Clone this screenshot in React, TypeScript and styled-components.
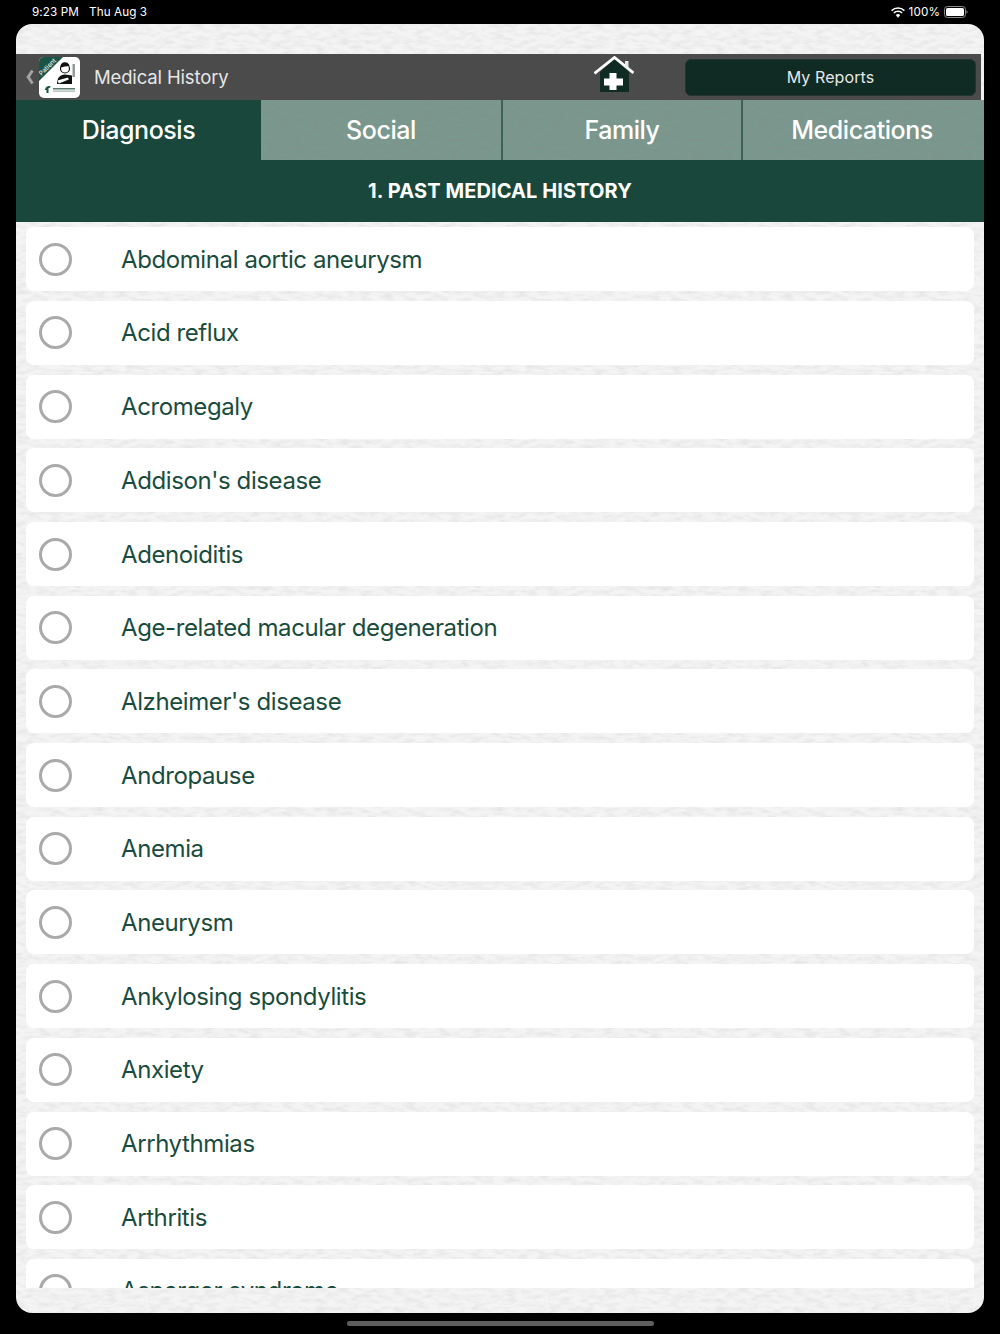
import styled, { createGlobalStyle } from "styled-components";

const noise = (opacity: number, freq: string, tint: string) =>
  `url("data:image/svg+xml,${encodeURIComponent(
    `<svg xmlns='http://www.w3.org/2000/svg' width='400' height='400'><filter id='n' x='0' y='0' width='100%' height='100%'><feTurbulence type='fractalNoise' baseFrequency='${freq}' numOctaves='4' seed='7' stitchTiles='stitch'/><feColorMatrix values='0 0 0 0 ${tint} 0 0 0 0 ${tint} 0 0 0 0 ${tint} 1.8 0 0 0 -0.68'/></filter><rect width='400' height='400' filter='url(#n)' opacity='${opacity}'/></svg>`
  )}")`;

const paper = `background: #f4f4f4 ${noise(0.34, "0.09 0.24", "0.55")};`;
const slate = `background: #7a988e ${noise(0.3, "0.1 0.28", "0.25")};`;

const GlobalStyle = createGlobalStyle`
  html, body {
    margin: 0;
    background: #000;
  }
  * {
    box-sizing: border-box;
  }
`;

const Screen = styled.div`
  width: 1000px;
  height: 1334px;
  background: #000;
  font-family: Inter, "Noto Sans", sans-serif;
  display: flex;
  flex-direction: column;
  overflow: hidden;
`;

const StatusBar = styled.div`
  height: 24px;
  flex: none;
  padding: 0 32px 0 32px;
  display: flex;
  align-items: center;
  color: #fff;
  font-size: 11.7px;
  letter-spacing: 0.1px;
`;

const StatusTime = styled.span`
  margin-right: 10px;
`;

const StatusRight = styled.div`
  margin-left: auto;
  display: flex;
  align-items: center;
  gap: 4px;
`;

const Frame = styled.div`
  flex: none;
  height: 1289px;
  margin: 0 16px;
  border-radius: 16px;
  overflow: hidden;
  display: flex;
  flex-direction: column;
  ${paper}
`;

const TopGap = styled.div`
  height: 30px;
  flex: none;
`;

const Header = styled.header`
  height: 46px;
  flex: none;
  margin-right: 3px;
  background: #4b4b4b;
  display: flex;
  align-items: center;
  padding: 0 5px 0 9px;
`;

const BackChevron = styled.svg`
  width: 10px;
  height: 16px;
  margin-right: 4px;
`;

const AppIcon = styled.svg`
  width: 41px;
  height: 41px;
  margin-right: 14px;
`;

const HeaderTitle = styled.h1`
  margin: 0;
  width: 500px;
  color: #e6e6e6;
  font-size: 18.5px;
  font-weight: 400;
  letter-spacing: -0.15px;
`;

const HomeIcon = styled.svg`
  width: 40px;
  height: 36px;
  position: relative;
  top: -3px;
`;

const ReportsButton = styled.button`
  margin-left: auto;
  width: 291px;
  height: 37px;
  border: 1px solid #22352f;
  border-radius: 6px;
  background: #102a24;
  color: #e8e8e8;
  font: 400 16px Inter, "Noto Sans", sans-serif;
  letter-spacing: 0.1px;
`;

const Tabs = styled.nav`
  height: 60px;
  flex: none;
  display: grid;
  grid-template-columns: 245px 238px 238px 241px;
  column-gap: 2px;
  background: #3f6156;
`;

const Tab = styled.div<{ $active?: boolean }>`
  display: flex;
  align-items: flex-start;
  justify-content: center;
  padding-top: 13px;
  color: #fff;
  font-size: 25px;
  font-weight: 500;
  line-height: 34px;
  letter-spacing: -0.45px;
  ${(p) => (p.$active ? "background: #1a473b;" : slate)}

  &:nth-child(2) {
    margin-left: -2px;
  }
  &:last-child {
    padding-right: 3px;
  }
`;

const SectionTitle = styled.h2`
  margin: 0;
  height: 62px;
  flex: none;
  background: #1a473b;
  color: #fff;
  font-size: 20px;
  font-weight: 700;
  letter-spacing: 0.1px;
  display: flex;
  align-items: center;
  justify-content: center;
`;

const List = styled.ul`
  list-style: none;
  margin: 0;
  padding: 5.3px 10px 0;
  flex: 1;
  min-height: 0;
  overflow: hidden;
  display: flex;
  flex-direction: column;
  gap: 9.69px;
`;

const Row = styled.li`
  flex: none;
  height: 64px;
  border-radius: 8px;
  background: #fff;
  display: flex;
  align-items: center;
  padding-left: 13px;
`;

const Radio = styled.span`
  width: 33px;
  height: 33px;
  flex: none;
  border: 3px solid #aaaaaa;
  border-radius: 50%;
  margin-right: 49px;
`;

const RowLabel = styled.span`
  color: #1a4c3e;
  font-size: 24px;
  letter-spacing: -0.4px;
`;

const BottomGap = styled.div`
  height: 25px;
  flex: none;
`;

const HomeIndicatorZone = styled.div`
  flex: 1;
  display: flex;
  justify-content: center;
  padding-top: 8px;
`;

const HomeIndicator = styled.div`
  width: 307px;
  height: 5px;
  border-radius: 3px;
  background: #5e5e5e;
`;

const conditions = [
  "Abdominal aortic aneurysm",
  "Acid reflux",
  "Acromegaly",
  "Addison's disease",
  "Adenoiditis",
  "Age-related macular degeneration",
  "Alzheimer's disease",
  "Andropause",
  "Anemia",
  "Aneurysm",
  "Ankylosing spondylitis",
  "Anxiety",
  "Arrhythmias",
  "Arthritis",
  "Asperger syndrome",
];

const tabs = ["Diagnosis", "Social", "Family", "Medications"];

export default function App() {
  return (
    <>
      <GlobalStyle />
      <Screen>
        <StatusBar>
          <StatusTime>9:23 PM</StatusTime>
          <span>Thu Aug 3</span>
          <StatusRight>
            <svg width="14" height="11" viewBox="0 0 14 11">
              <path d="M0.6 3.6a9.2 9.2 0 0 1 12.8 0" fill="none" stroke="#fff" strokeWidth="1.5" />
              <path d="M2.9 5.9a6 6 0 0 1 8.2 0" fill="none" stroke="#fff" strokeWidth="1.5" />
              <path d="M5.1 8.1a2.9 2.9 0 0 1 3.8 0L7 10.4z" fill="#fff" stroke="#fff" strokeWidth="0.6" />
            </svg>
            <span>100%</span>
            <svg width="24" height="12" viewBox="0 0 24 12">
              <rect x="0.5" y="0.5" width="21" height="11" rx="3" fill="none" stroke="#8a8a8a" />
              <rect x="2" y="2" width="18" height="8" rx="1.6" fill="#fff" />
              <path d="M22.5 4.2a2 2 0 0 1 0 3.6z" fill="#8a8a8a" />
            </svg>
          </StatusRight>
        </StatusBar>

        <Frame>
          <TopGap />
          <Header>
            <BackChevron viewBox="0 0 10 16">
              <path d="M7.5 1.5 3.2 8l4.3 6.5" fill="none" stroke="#a3a3a3" strokeWidth="3" />
            </BackChevron>
            <AppIcon viewBox="0 0 41 41">
              <rect width="41" height="41" rx="5" fill="#fff" />
              <path d="M5 0h19L0 24V5a5 5 0 0 1 5-5z" fill="#1a5445" />
              <text
                x="2.5"
                y="19"
                fontSize="6.5"
                fill="#fff"
                fontFamily="Inter, sans-serif"
                transform="rotate(-45 2.5 19)"
              >
                Patient
              </text>
              <circle cx="26" cy="11.5" r="4.5" fill="#fff" stroke="#111" strokeWidth="1.2" />
              <path d="M21.5 10.500a4.500 4.500 0 0 1 9-1.500c-3 .5-6 .5-9 1.500z" fill="#111" />
              <path d="M18 27c0-6 3-9.500 8-9.500l7 1V27z" fill="#111" />
              <path d="M18.500 23.500 29 20.500l.8 2-10 4z" fill="#fff" />
              <rect x="33.500" y="7" width="2.400" height="13" fill="#8d9a95" />
              <path d="M6 33a4 4 0 0 1 6-3.500l-1.500 1.500H9.500v5H7.500v-3z" fill="#1a5445" />
              <rect x="14" y="31" width="22" height="1.500" fill="#5d7a70" />
              <rect x="14" y="33.500" width="22" height="1.200" fill="#9eb0a9" />
            </AppIcon>
            <HeaderTitle>Medical History</HeaderTitle>
            <HomeIcon viewBox="0 0 40 36">
              <path d="M6 36V16L21 3l14 13v20z" fill="#102a24" />
              <path d="M0.500 17.500 20.500 1.500l19 15.500" fill="none" stroke="#fff" strokeWidth="2.800" />
              <rect x="31" y="5" width="3.500" height="6.500" fill="#e8e8e8" />
              <path d="M15.500 17h7v5.500H29v7h-6.500V34h-7v-4.500H10v-7h5.500z" fill="#fff" />
            </HomeIcon>
            <ReportsButton>My Reports</ReportsButton>
          </Header>

          <Tabs>
            {tabs.map((t, i) => (
              <Tab key={t} $active={i === 0}>
                {t}
              </Tab>
            ))}
          </Tabs>

          <SectionTitle>1. PAST MEDICAL HISTORY</SectionTitle>

          <List>
            {conditions.map((c) => (
              <Row key={c}>
                <Radio />
                <RowLabel>{c}</RowLabel>
              </Row>
            ))}
          </List>
          <BottomGap />
        </Frame>

        <HomeIndicatorZone>
          <HomeIndicator />
        </HomeIndicatorZone>
      </Screen>
    </>
  );
}
